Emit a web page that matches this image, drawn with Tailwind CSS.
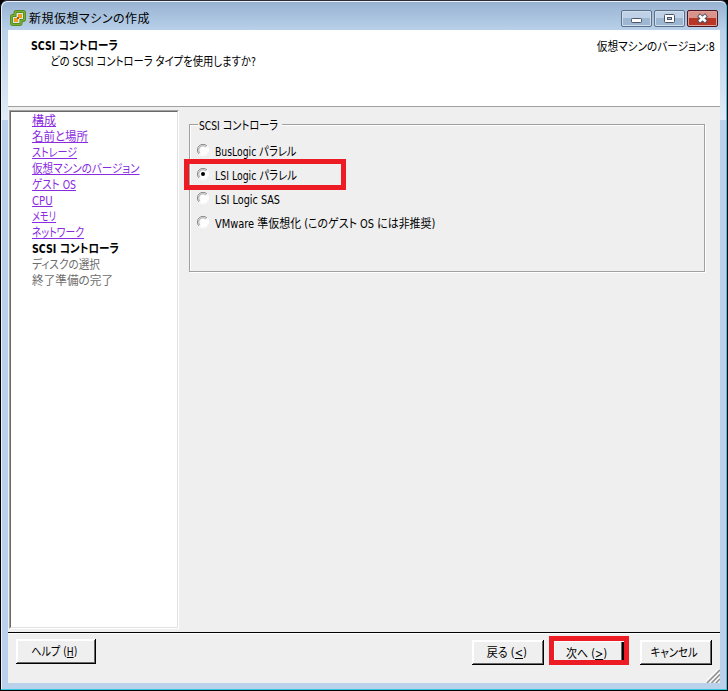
<!DOCTYPE html>
<html lang="ja">
<head>
<meta charset="utf-8">
<title>新規仮想マシンの作成</title>
<script src="https://cdn.jsdelivr.net/npm/@tailwindcss/browser@4"></script>
</head>
<body class="w-[728px] h-[691px] overflow-hidden bg-black text-black text-[12px] leading-4 whitespace-nowrap font-['DejaVu_Sans_Condensed','Noto_Sans_CJK_JP',sans-serif] [font-feature-settings:'palt']">
<div class="relative w-[728px] h-[691px] flex flex-col rounded-t-[7px] bg-[#b9d1ea] border-t border-l border-r border-b border-t-[#302c38] border-l-black border-r-black border-b-black shadow-[inset_-1px_-1px_0_#35c6e0,inset_1px_1px_0_#e4f0fa]">
  <div class="absolute left-px top-[29px] w-[6px] h-[90px] bg-linear-to-b from-[#b9d1ea] to-[#e0ebf7]"></div>
  <div class="absolute right-px top-[29px] w-[6px] h-[90px] bg-linear-to-b from-[#b9d1ea] to-[#e0ebf7]"></div>

  <!-- Title bar -->
  <header class="h-[29px] mx-px mt-px -mb-px shrink-0 flex items-start rounded-t-[6px] bg-linear-to-b from-[#98b3d2] to-[#b9d1ea] pl-[8px] pr-[8px]">
    <svg class="mt-[8px] shrink-0" width="16" height="16" viewBox="0 0 16 16">
      <path d="M6.500 1.500H13A1.500 1.500 0 0 1 14.500 3v6a1.500 1.500 0 0 1-1.500 1.500h-2V13a1.500 1.500 0 0 1-1.500 1.500H3A1.500 1.500 0 0 1 1.500 13V7A1.500 1.500 0 0 1 3 5.500h2V3A1.500 1.500 0 0 1 6.500 1.500z" fill="#dce8e4" stroke="#4f8020" stroke-width="3"/>
      <path d="M6.500 1.500H13A1.500 1.500 0 0 1 14.500 3v6a1.500 1.500 0 0 1-1.500 1.500h-2V13a1.500 1.500 0 0 1-1.500 1.500H3A1.500 1.500 0 0 1 1.500 13V7A1.500 1.500 0 0 1 3 5.500h2V3A1.500 1.500 0 0 1 6.500 1.500z" fill="none" stroke="#78b030" stroke-width="1.600"/>
      <path d="M8 4h4v4h-4zM4 8h4v4h-4z" fill="#f59c1c"/>
      <path d="M7 7h2v2h-2z" fill="#a85a10"/>
    </svg>
    <h1 class="mt-[9px] ml-[3px] tracking-[.5px]">新規仮想マシンの作成</h1>
    <div class="ml-auto mt-[8px] flex gap-[2px]">
      <div class="w-[31px] h-[17px] rounded-[2px] border border-[#5c6f86] bg-linear-to-b from-[#bfd1e6] from-50% to-[#9db7d3] to-50% shadow-[inset_0_0_0_1px_#d0dfee] flex items-center justify-center">
        <svg class="translate-y-[2px]" width="12" height="6"><rect x=".5" y=".5" width="10" height="4" rx=".8" fill="#fff" stroke="#4c5464"/></svg>
      </div>
      <div class="w-[31px] h-[17px] rounded-[2px] border border-[#5c6f86] bg-linear-to-b from-[#bfd1e6] from-50% to-[#9db7d3] to-50% shadow-[inset_0_0_0_1px_#d0dfee] flex items-center justify-center">
        <svg width="11" height="9"><rect x=".5" y=".5" width="10" height="8" rx="1" fill="#fff" stroke="#4c5464"/><rect x="3.500" y="3.500" width="4" height="2" fill="#a9bfd8" stroke="#4c5464"/></svg>
      </div>
      <div class="w-[31px] h-[17px] rounded-[2px] border border-[#4e1620] bg-linear-to-b from-[#d9938a] from-50% to-[#b93526] to-50% shadow-[inset_0_0_0_1px_#dda39a] flex items-center justify-center">
        <svg width="13" height="11"><path d="M2.500 2l8 7M10.500 2l-8 7" stroke="#4c5464" stroke-width="4.400"/><path d="M3.200 2.600l6.600 5.800M9.800 2.600l-6.600 5.800" stroke="#fff" stroke-width="2.600"/></svg>
      </div>
    </div>
  </header>

  <main class="relative ml-[7px] w-[712px] h-[653px] shrink-0 bg-[#efefef] flex flex-col">
    <!-- Page heading -->
    <div class="h-[77px] shrink-0 bg-white border-b border-[#a0a0a0] flex justify-between">
      <div class="pt-[8px] pl-[23px]">
        <h2 class="font-bold origin-left scale-x-[.879]">SCSI コントローラ</h2>
        <p class="pl-[19px]"><span class="inline-block origin-left scale-x-[.861]">どの SCSI コントローラ タイプを使用しますか?</span></p>
      </div>
      <p class="pt-[9px] pr-[5px]"><span class="inline-block origin-right scale-x-[.889]">仮想マシンのバージョン:8</span></p>
    </div>

    <div class="h-[525px] shrink-0 flex pt-[3px] pl-px">
      <!-- Wizard steps -->
      <nav class="w-[170px] h-[519px] border border-t-[#a0a0a0] border-l-[#a0a0a0] border-r-[#fff] border-b-[#fff]">
        <ul class="h-full bg-white border border-t-[#696969] border-l-[#696969] border-r-[#e3e3e3] border-b-[#e3e3e3] pl-[21px] pt-px text-[#8a2be2]">
          <li class="h-4"><a class="inline-block underline">構成</a></li>
          <li class="h-4"><a class="inline-block underline origin-left scale-x-[.955]">名前と場所</a></li>
          <li class="h-4"><a class="inline-block underline origin-left scale-x-[.835]">ストレージ</a></li>
          <li class="h-4"><a class="inline-block underline origin-left scale-x-[.879]">仮想マシンのバージョン</a></li>
          <li class="h-4"><a class="inline-block underline origin-left scale-x-[.873]">ゲスト OS</a></li>
          <li class="h-4"><a class="inline-block underline origin-left scale-x-[.935]">CPU</a></li>
          <li class="h-4"><a class="inline-block underline origin-left scale-x-[.757]">メモリ</a></li>
          <li class="h-4"><a class="inline-block underline origin-left scale-x-[.82]">ネットワーク</a></li>
          <li class="h-4 text-black font-bold"><span class="inline-block origin-left scale-x-[.88]">SCSI コントローラ</span></li>
          <li class="h-4 text-[#6d6d6d]"><span class="inline-block origin-left scale-x-[.885]">ディスクの選択</span></li>
          <li class="h-4 text-[#6d6d6d]"><span class="inline-block origin-left scale-x-[.97]">終了準備の完了</span></li>
        </ul>
      </nav>

      <!-- Controller type -->
      <section class="relative ml-[10px] mt-[14px] w-[516px] h-[148px] border border-[#a0a0a0] shadow-[1px_1px_0_#fff,inset_1px_1px_0_#fff] pt-[19px] pl-[7px]">
        <div class="absolute left-[8px] -top-[7px] w-[84px] h-4 bg-[#efefef] pl-px"><span class="inline-block origin-left scale-x-[.85]">SCSI コントローラ</span></div>
        <div class="absolute -left-[6px] top-[34px] w-[162px] h-[31px] border-5 border-[#ed1c24]"></div>
        <label class="flex h-6 items-start">
          <svg class="mr-[6px]" width="12" height="12" viewBox="0 0 12 12"><circle cx="6" cy="6" r="5" fill="#fff"/><path d="M2 10A5.500 5.500 0 0 1 10 2" fill="none" stroke="#8a8a8a"/><path d="M10 2A5.500 5.500 0 0 1 2 10" fill="none" stroke="#fff"/><path d="M3 9A4.200 4.200 0 0 1 9 3" fill="none" stroke="#696969" stroke-width=".6"/></svg>
          <span class="origin-left scale-x-[.858]">BusLogic パラレル</span>
        </label>
        <label class="flex h-6 items-start">
          <svg class="mr-[6px]" width="12" height="12" viewBox="0 0 12 12"><circle cx="6" cy="6" r="5" fill="#fff"/><path d="M2 10A5.500 5.500 0 0 1 10 2" fill="none" stroke="#8a8a8a"/><path d="M10 2A5.500 5.500 0 0 1 2 10" fill="none" stroke="#fff"/><path d="M3 9A4.200 4.200 0 0 1 9 3" fill="none" stroke="#696969" stroke-width=".6"/><circle cx="6" cy="6" r="2" fill="#000"/></svg>
          <span class="origin-left scale-x-[.867]">LSI Logic パラレル</span>
        </label>
        <label class="flex h-6 items-start">
          <svg class="mr-[6px]" width="12" height="12" viewBox="0 0 12 12"><circle cx="6" cy="6" r="5" fill="#fff"/><path d="M2 10A5.500 5.500 0 0 1 10 2" fill="none" stroke="#8a8a8a"/><path d="M10 2A5.500 5.500 0 0 1 2 10" fill="none" stroke="#fff"/><path d="M3 9A4.200 4.200 0 0 1 9 3" fill="none" stroke="#696969" stroke-width=".6"/></svg>
          <span class="origin-left scale-x-[.898]">LSI Logic SAS</span>
        </label>
        <label class="flex h-6 items-start">
          <svg class="mr-[6px]" width="12" height="12" viewBox="0 0 12 12"><circle cx="6" cy="6" r="5" fill="#fff"/><path d="M2 10A5.500 5.500 0 0 1 10 2" fill="none" stroke="#8a8a8a"/><path d="M10 2A5.500 5.500 0 0 1 2 10" fill="none" stroke="#fff"/><path d="M3 9A4.200 4.200 0 0 1 9 3" fill="none" stroke="#696969" stroke-width=".6"/></svg>
          <span class="origin-left scale-x-[.912]">VMware 準仮想化 (このゲスト OS には非推奨)</span>
        </label>
      </section>
    </div>

    <!-- Buttons -->
    <footer class="relative h-[51px] shrink-0 flex items-start border-t border-black shadow-[inset_0_1px_0_#fff] pl-[8px] pr-[8px]">
      <button class="mt-[6px] w-[80px] h-[25px] flex items-center justify-center bg-[#efefef] border-r border-b border-black shadow-[inset_1px_1px_0_#fff,inset_-1px_-1px_0_#696969,inset_2px_2px_0_#fff]"><span class="scale-x-[.845] -translate-x-[1px] translate-y-[1px]">ヘルプ (<u>H</u>)</span></button>
      <button class="mt-[7px] ml-auto w-[72px] h-[25px] flex items-center justify-center bg-[#efefef] border-r border-b border-black shadow-[inset_1px_1px_0_#fff,inset_-1px_-1px_0_#696969,inset_2px_2px_0_#fff]"><span class="scale-x-[.917] -translate-x-[1px] translate-y-[1px]">戻る (<u>&lt;</u>)</span></button>
      <button class="mt-[3px] ml-[5px] w-[80px] h-[29px] flex items-center justify-center bg-[#efefef] border-5 border-[#ed1c24] shadow-[inset_1px_1px_0_#fff,inset_-2px_0_0_#000,inset_-3px_0_0_#696969]"><span class="scale-x-[.911] -translate-x-[2px] translate-y-[3px]">次へ (<u>&gt;</u>)</span></button>
      <button class="mt-[7px] ml-[11px] w-[72px] h-[25px] flex items-center justify-center bg-[#efefef] border-r border-b border-black shadow-[inset_1px_1px_0_#fff,inset_-1px_-1px_0_#696969,inset_2px_2px_0_#fff]"><span class="scale-x-[.864] -translate-x-[1px] translate-y-[1px]">キャンセル</span></button>
      <svg class="absolute right-0 bottom-0" width="14" height="14" viewBox="0 0 14 14"><path d="M0 14L14 0M5 14L14 5M10 14L14 10" stroke="#fff" stroke-width="1" transform="translate(-1,-1)"/><path d="M1 14L14 1M5.500 14L14 5.500M10 14L14 10" stroke="#8d8d8d" stroke-width="1.500"/></svg>
    </footer>
  </main>
</div>
</body>
</html>
